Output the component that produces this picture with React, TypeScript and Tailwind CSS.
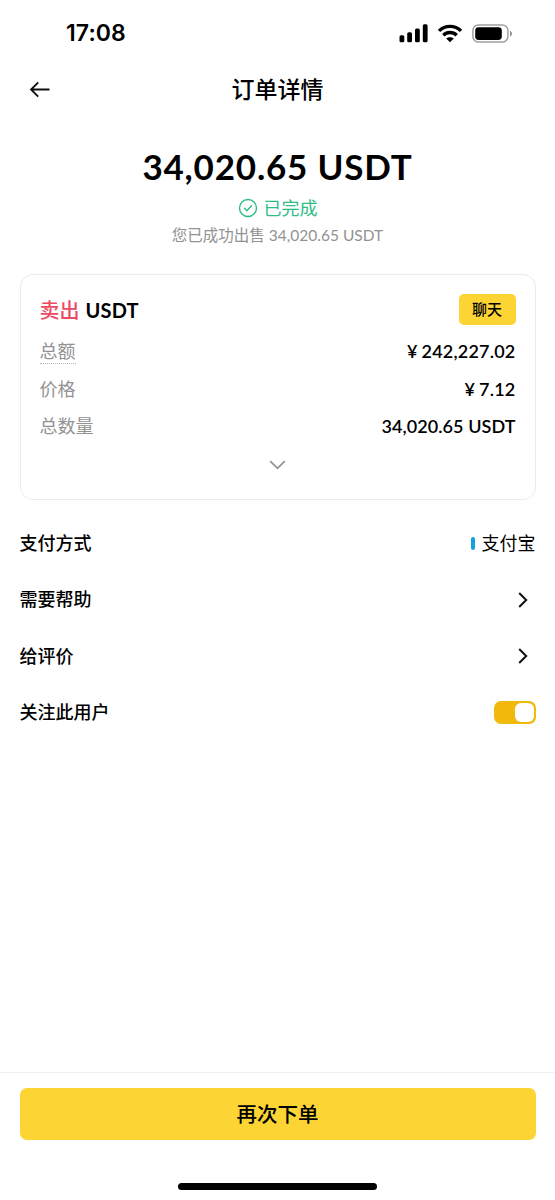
import React, { useState } from 'react';

const ORDER_ROWS: { label: string; currency?: string; value: string; hint?: boolean; tracking: string }[] = [
  { label: '总额', currency: '¥', value: '242,227.02', hint: true, tracking: 'tracking-[0.2px]' },
  { label: '价格', currency: '¥', value: '7.12', tracking: 'tracking-[0.2px]' },
  { label: '总数量', value: '34,020.65 USDT', tracking: 'tracking-[0.08px]' },
];

function StatusBar() {
  return (
    <div className="h-[60px] pt-[6px] pl-[66px] pr-[42px] flex items-center justify-between">
      <span className="pt-px font-['Inter',sans-serif] font-semibold text-[23px] leading-none tracking-[0.1px]">17:08</span>
      <div className="flex items-center">
        <svg width="29" height="19" viewBox="0 0 29 19" className="mr-[9px]">
          <rect x="0.5" y="11.3" width="4.8" height="7" rx="1.5" />
          <rect x="8.2" y="8.3" width="4.8" height="10" rx="1.5" />
          <rect x="16" y="4.5" width="4.8" height="13.8" rx="1.5" />
          <rect x="23.8" y="0.3" width="4.8" height="18" rx="1.5" />
        </svg>
        <svg width="26" height="19" viewBox="0 0 26 19" className="mr-[9px]" fill="none" stroke="#000" strokeWidth="3.4">
          <path d="M2 6.9C8.2 0.9 17.8 0.9 24 6.9" />
          <path d="M6.3 11.2C10.1 7.6 15.9 7.6 19.7 11.2" />
          <path d="M13 18.3L9.2 14.6C11.3 12.7 14.7 12.7 16.8 14.6Z" fill="#000" stroke="none" />
        </svg>
        <svg width="41" height="19" viewBox="0 0 41 19">
          <rect x="0.9" y="0.9" width="35" height="17.2" rx="5.6" fill="none" stroke="#9f9f9f" strokeWidth="1.5" />
          <rect x="3.2" y="3.2" width="26.6" height="12.8" rx="3.4" />
          <path d="M38 6.7C40.6 7.6 40.6 11.6 38 12.5Z" fill="#8e8e8e" />
        </svg>
      </div>
    </div>
  );
}

function ListRow({ label, children }: { label: string; children: React.ReactNode }) {
  return (
    <div className="h-[56.3px] flex items-center justify-between">
      <span className="text-[18px] font-medium">{label}</span>
      {children}
    </div>
  );
}

function ChevronRight() {
  return (
    <svg width="10" height="16" viewBox="0 0 10 16" className="mr-2" fill="none" stroke="#111" strokeWidth="2">
      <path d="M1.2 1L8.2 8L1.2 15" />
    </svg>
  );
}

export default function App() {
  const [following, setFollowing] = useState(true);

  return (
    <div className="w-[555px] h-[1200px] bg-white text-black flex flex-col overflow-hidden font-['Lato','Noto_Sans_CJK_SC',sans-serif]">
      <StatusBar />

      {/* ====== Header ====== */}
      <header className="h-[58px] px-[29px] grid grid-cols-[1fr_auto_1fr] items-center">
        <button title="返回">
          <svg width="22" height="18" viewBox="0 0 22 18" fill="none" stroke="#111" strokeWidth="1.9">
            <path d="M20.5 9.5H2.5M9.2 2.4L2.1 9.5L9.2 16.6" />
          </svg>
        </button>
        <h1 className="text-[23px] leading-none font-medium">订单详情</h1>
      </header>

      {/* ====== Amount ====== */}
      <section className="pt-[28px] flex flex-col items-center">
        <p className="h-10 flex items-center text-[35px] font-bold tracking-[0.8px] whitespace-nowrap">34,020.65 USDT</p>
        <div className="mt-[8px] h-7 flex items-center gap-[6px] text-[#2dbd85]">
          <svg width="20" height="20" viewBox="0 0 20 20" fill="none" stroke="currentColor" strokeWidth="1.4">
            <circle cx="10" cy="10" r="8.5" />
            <path d="M6.2 9.9L8.9 12.7L13.9 7.3" />
          </svg>
          <span className="text-[18px]">已完成</span>
        </div>
        <p className="mt-[2px] h-6 flex items-center text-[15.5px] text-[#929292] whitespace-nowrap">您已成功出售 34,020.65 USDT</p>
      </section>

      {/* ====== Order card ====== */}
      <section className="mx-[19.5px] mt-[26px] h-[226px] px-[19px] pt-[19px] border border-[#ebebeb] rounded-[13px] flex flex-col">
        <div className="h-[31px] flex items-center justify-between">
          <h2 className="text-[20px] leading-none font-bold">
            <span className="text-[#ec4b64] font-medium">卖出</span>
            <span className="ml-[6px] tracking-[0.2px]">USDT</span>
          </h2>
          <button className="w-[57px] h-[31px] rounded-[5px] bg-[#fcd535] text-[15px] font-medium">聊天</button>
        </div>
        <div className="mt-[8px]">
          {ORDER_ROWS.map((row) => (
            <div key={row.label} className="h-[37.6px] flex items-center justify-between text-[18px]">
              <span className={row.hint ? 'leading-[24px] border-b border-dotted border-[#b5b5b5] text-[#929292]' : 'text-[#929292]'}>
                {row.label}
              </span>
              <span className={`font-semibold ${row.tracking}`}>
                {row.currency && <span className="mr-1">{row.currency}</span>}
                {row.value}
              </span>
            </div>
          ))}
        </div>
        <svg width="17" height="10" viewBox="0 0 17 10" className="mt-[14px] self-center" fill="none" stroke="#929292" strokeWidth="1.7">
          <path d="M1.2 1.2L8.5 8.4L15.8 1.2" />
        </svg>
      </section>

      {/* ====== Options ====== */}
      <section className="mt-[15.5px] px-[19.5px]">
        <ListRow label="支付方式">
          <span className="flex items-center gap-[7px] text-[18px]">
            <span className="w-1 h-[13px] rounded-full bg-[#15a0e0]" />
            支付宝
          </span>
        </ListRow>
        <ListRow label="需要帮助">
          <ChevronRight />
        </ListRow>
        <ListRow label="给评价">
          <ChevronRight />
        </ListRow>
        <ListRow label="关注此用户">
          <button
            onClick={() => setFollowing(!following)}
            className={`w-[42px] h-[23px] p-[2px] rounded-[7px] flex items-center ${following ? 'bg-[#f0b90b] justify-end' : 'bg-gray-300 justify-start'}`}
            title="关注"
          >
            <span className="w-[19px] h-[19px] rounded-[6px] bg-white" />
          </button>
        </ListRow>
      </section>

      {/* ====== Footer ====== */}
      <footer className="mt-auto h-[128px] px-[19.5px] pt-[15px] border-t border-[#f0f0f2] flex flex-col items-center">
        <button className="w-full h-[52px] rounded-[7px] bg-[#fcd535] text-[20.5px] font-medium">再次下单</button>
        <div className="mt-[43px] w-[199px] h-[7px] rounded-full bg-black" />
      </footer>
    </div>
  );
}
